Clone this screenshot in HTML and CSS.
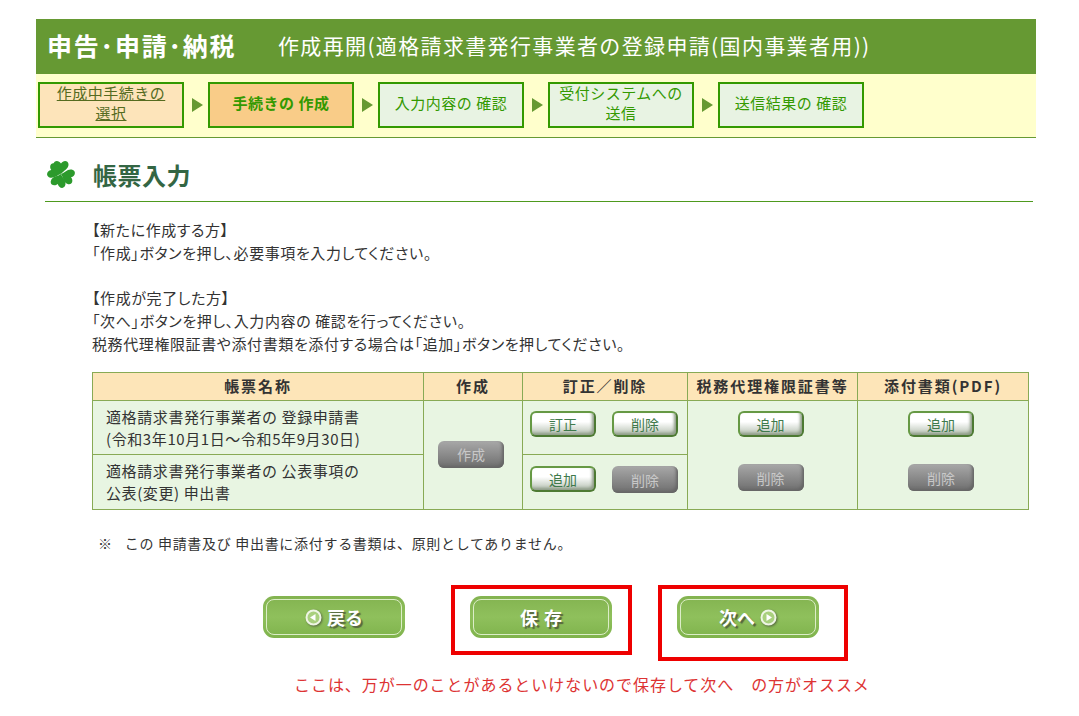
FILE: index.html
```html
<!DOCTYPE html>
<html lang="ja">
<head>
    <meta charset="UTF-8">
    <meta name="viewport" content="width=device-width, initial-scale=1.0">
    <title>帳票入力</title>
    <link rel="stylesheet" href="styles.css">
</head>
<body>
    <div class="page">
        <div class="header">
            <h1 class="header-title">申告･申請･納税</h1>
            <p class="header-sub">作成再開(適格請求書発行事業者の登録申請(国内事業者用))</p>
        </div>
        <div class="steps">
            <a href="#" class="step step-done"><span>作成中手続きの<br>選択</span></a>
            <span class="step-arrow"></span>
            <div class="step step-now"><span>手続きの 作成</span></div>
            <span class="step-arrow"></span>
            <div class="step"><span>入力内容の 確認</span></div>
            <span class="step-arrow"></span>
            <div class="step"><span>受付システムへの<br>送信</span></div>
            <span class="step-arrow"></span>
            <div class="step"><span>送信結果の 確認</span></div>
        </div>

        <div class="title-row">
            <svg class="clover" width="30" height="28" viewBox="-15 -14 30 28">
                <defs>
                    <path id="leaf" d="M0 0C-2 -3 -8 -5 -7.5 -10C-7 -14 -2 -14 0 -10.500C2 -14 7 -14 7.500 -10C8 -5 2 -3 0 0Z"/>
                </defs>
                <g fill="#2c9a2c">
                    <use href="#leaf" transform="rotate(0)"/>
                    <use href="#leaf" transform="rotate(108)"/>
                    <use href="#leaf" transform="rotate(198)"/>
                    <use href="#leaf" transform="rotate(292)"/>
                </g>
            </svg>
            <h2 class="title-text">帳票入力</h2>
        </div>

        <div class="intro">
            <p>【新たに作成する方】</p>
            <p>「作成」ボタンを押し、必要事項を入力してください。</p>
            <p>&nbsp;</p>
            <p>【作成が完了した方】</p>
            <p>「次へ」ボタンを押し、入力内容の 確認を行ってください。</p>
            <p>税務代理権限証書や添付書類を添付する場合は「追加」ボタンを押してください。</p>
        </div>

        <table class="forms">
            <thead>
                <tr>
                    <th class="col-name">帳票名称</th>
                    <th class="col-make">作成</th>
                    <th class="col-edit">訂正／削除</th>
                    <th class="col-proxy">税務代理権限証書等</th>
                    <th class="col-file">添付書類(PDF)</th>
                </tr>
            </thead>
            <tbody>
                <tr class="row-first">
                    <td class="name">適格請求書発行事業者の 登録申請書<br>(令和3年10月1日～令和5年9月30日)</td>
                    <td rowspan="2" class="center"><button class="btn btn-off">作成</button></td>
                    <td class="cell-top"><div class="pair"><button class="btn">訂正</button><button class="btn">削除</button></div></td>
                    <td rowspan="2" class="cell-top"><div class="stack"><button class="btn">追加</button><button class="btn btn-off">削除</button></div></td>
                    <td rowspan="2" class="cell-top"><div class="stack"><button class="btn">追加</button><button class="btn btn-off">削除</button></div></td>
                </tr>
                <tr class="row-second">
                    <td class="name">適格請求書発行事業者の 公表事項の<br>公表(変更) 申出書</td>
                    <td class="cell-top"><div class="pair"><button class="btn">追加</button><button class="btn btn-off">削除</button></div></td>
                </tr>
            </tbody>
        </table>

        <p class="note">※<span class="note-text">この 申請書及び 申出書に添付する書類は、原則としてありません。</span></p>

        <div class="actions">
            <div class="action">
                <button class="big-btn">
                    <svg class="ring" width="17" height="17" viewBox="0 0 17 17"><circle cx="8.500" cy="8.500" r="7" fill="#a9d07e" stroke="#eef5e4" stroke-width="2"/><path d="M5 8.500L10.500 5V12Z" fill="#fff"/></svg>
                    戻る
                </button>
            </div>
            <div class="action"><button class="big-btn big-btn-wide">保 存</button><span class="mark mark-save"></span></div>
            <div class="action">
                <button class="big-btn">
                    次へ
                    <svg class="ring" width="17" height="17" viewBox="0 0 17 17"><circle cx="8.500" cy="8.500" r="7" fill="#a9d07e" stroke="#eef5e4" stroke-width="2"/><path d="M12 8.500L6.500 5V12Z" fill="#fff"/></svg>
                </button>
                <span class="mark mark-next"></span>
            </div>
        </div>

        <p class="advice">ここは、万が一のことがあるといけないので保存して次へ　の方がオススメ</p>
    </div>
</body>
</html>
```

FILE: styles.css
```css
* {
    box-sizing: border-box;
}
body {
    margin: 0;
    background: #fff;
    color: #333;
    font-family: "Noto Sans CJK JP", "Liberation Sans", sans-serif;
}
p {
    margin: 0;
}
.page {
    width: 1000px;
    margin: 19px 0 0 36px;
}

/* header */
.header {
    display: flex;
    align-items: center;
    height: 55px;
    padding: 0 0 3px 11px;
    background: #669933;
    color: #fff;
}
.header-title {
    margin: 0;
    width: 231px;
    font-size: 25px;
    font-weight: 700;
    letter-spacing: 1.8px;
    white-space: nowrap;
    color: #fff;
}
.header-sub {
    font-size: 21px;
    letter-spacing: 1.35px;
    white-space: nowrap;
}

/* steps */
.steps {
    display: flex;
    align-items: center;
    height: 64px;
    padding: 0 2px 1px;
    background: #ffffcc;
    border-bottom: 1px solid #669933;
}
.step {
    display: flex;
    align-items: center;
    justify-content: center;
    width: 146px;
    height: 46px;
    padding-bottom: 4px;
    border: 2px solid #339900;
    background: #e8f3e3;
    color: #339900;
    font-size: 15px;
    letter-spacing: 0.5px;
    line-height: 20px;
    text-align: center;
}
.step-done {
    background: #fde4ba;
    color: #556b1f;
    text-decoration: underline;
}
.step-now {
    background: #f9cc88;
    font-weight: 700;
}
.step-arrow {
    width: 0;
    height: 0;
    margin: 0 5px 0 8px;
    border-left: 11px solid #669933;
    border-top: 7px solid transparent;
    border-bottom: 7px solid transparent;
}

/* title */
.title-row {
    display: flex;
    align-items: center;
    gap: 17px;
    width: 988px;
    height: 64px;
    margin-left: 9px;
    padding: 9px 0 0 1px;
    border-bottom: 1px solid #4e9a1e;
}
.title-text {
    margin: 0;
    font-size: 24px;
    font-weight: 700;
    letter-spacing: 0.5px;
    color: #336644;
}

/* intro */
.intro {
    padding: 17px 0 0 56px;
    font-size: 15px;
    font-feature-settings: "palt";
    letter-spacing: 0.6px;
    line-height: 22.7px;
}

/* table */
.forms {
    width: 936px;
    margin: 17px 0 0 56px;
    border-collapse: collapse;
    table-layout: fixed;
}
.forms th,
.forms td {
    border: 1px solid #88aa55;
}
.forms th {
    height: 28px;
    padding: 0 0 3px;
    background: #fde5b8;
    font-size: 15px;
    font-weight: 700;
    letter-spacing: 1.9px;
}
.forms td {
    padding: 0;
    background: #e8f5e2;
    vertical-align: middle;
}
.col-name { width: 331px; }
.col-make { width: 99px; }
.col-edit { width: 165px; }
.col-proxy { width: 170px; }
.col-file { width: 171px; }
.row-first td { height: 54px; }
.row-second td { height: 55px; }
.forms td.name {
    padding-left: 13px;
    font-size: 15px;
    letter-spacing: 0.6px;
    line-height: 22px;
}
.forms td.center {
    padding: 0 4px 2px 0;
    text-align: center;
}
.forms td.cell-top {
    padding-top: 10px;
    vertical-align: top;
}
.row-second td.cell-top {
    padding-top: 11px;
}
.pair {
    display: flex;
    gap: 16px;
    padding-left: 7px;
}
.stack {
    display: flex;
    flex-direction: column;
    align-items: center;
    gap: 27px;
    padding-right: 4px;
}

.btn {
    width: 66px;
    height: 26px;
    padding: 0;
    border: 2px solid #669944;
    border-right-color: #4d7a33;
    border-bottom-color: #4d7a33;
    border-radius: 6px;
    background: linear-gradient(#fff 40%, #b4bfb0);
    box-shadow: inset -2px -2px 3px #8f9c88;
    color: #3f7a4c;
    font-family: inherit;
    font-size: 14px;
    line-height: 20px;
}
.btn-off {
    height: 27px;
    border: 0;
    background: linear-gradient(#a8a8a8, #6e6e6e);
    box-shadow: inset -2px -2px 3px #666;
    color: #c8c8c8;
}

.note {
    display: flex;
    margin-top: 22px;
    padding-left: 62px;
    font-size: 14px;
    letter-spacing: 0.7px;
    line-height: 23px;
}
.note-text {
    margin-left: 12px;
}

/* bottom buttons */
.actions {
    display: flex;
    gap: 65px;
    margin: 41px 0 0 227px;
}
.action {
    position: relative;
}
.big-btn {
    display: flex;
    align-items: center;
    justify-content: center;
    gap: 5px;
    width: 142px;
    height: 42px;
    padding: 0;
    border: 0;
    border-radius: 11px;
    outline: 1px solid #dcedc8;
    outline-offset: -4px;
    background: linear-gradient(#83b350, #8fc05c 50%, #7fb34c);
    color: #fff;
    font-family: inherit;
    font-size: 18px;
    font-weight: 700;
    text-shadow: 2px 2px 1px #55663f;
}
.big-btn-wide {
    word-spacing: 2px;
}
.ring {
    filter: drop-shadow(1px 1px 1px #55663f);
}

/* red marks drawn over the page */
.mark {
    position: absolute;
    top: -11px;
    border: 4px solid #ee0000;
}
.mark-save {
    left: -19px;
    width: 181px;
    height: 70px;
}
.mark-next {
    left: -19px;
    width: 190px;
    height: 76px;
}

.advice {
    margin: 34px 0 0 258px;
    color: #dd3333;
    font-size: 16px;
    line-height: 24px;
    letter-spacing: 0.95px;
    white-space: nowrap;
}
```
